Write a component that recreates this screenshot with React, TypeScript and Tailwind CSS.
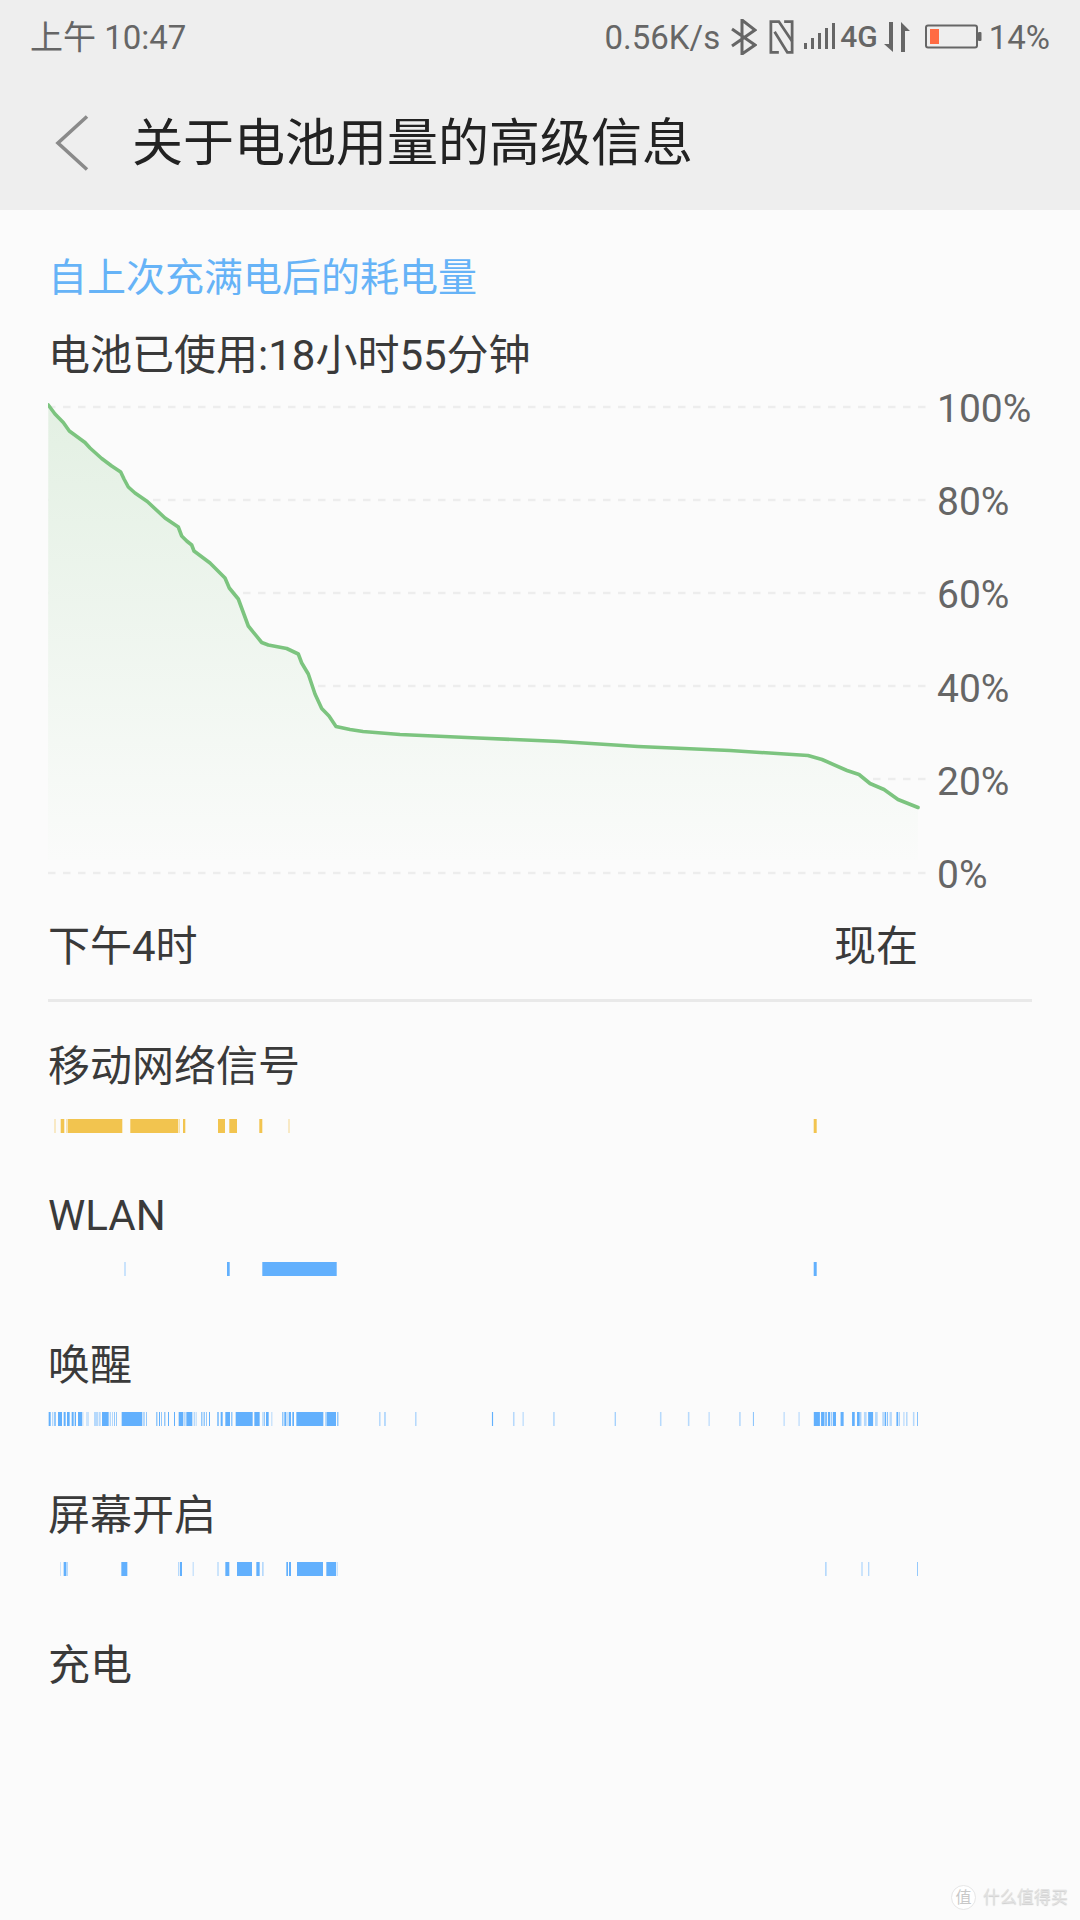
const FONT = 'font-["Roboto","Noto_Sans_CJK_SC",sans-serif]';

const top1 = "48.3,405 55,414 63.3,422.5 69.3,431 85,442.5 90,448 101.7,458.5 111.7,466 120.7,472 124,479 128.3,487 135,493 147.3,501.5 165,518 178.3,527 181.7,536 186.7,541 191.7,545 194,551 210,563 225,578 229.3,588 238.3,599 248.3,626 261.7,642.5 268.3,645 286.7,648.5 298.3,654 301.7,663 308.3,674 315,694 321.7,708.5 329,716 336,726.5 350,729.5 363,731.5 400,734.5 478,738 560,741.5 638,746.5 730,750.5 808,755.5 822,759.5 847,770.5 859,774.5 870,783.5 884,789.5 898,799.5 918,807.5";

type Seg = [number, number, number?];
const sc = (arr: Seg[], ox: number, k: number): Seg[] =>
  arr.map(([a, b, l]) => [ox + a / k, ox + b / k, l] as Seg);

const yellow: Seg[] = [
  [54.3, 55.7, 1], [60.7, 64.3], [66, 67.3, 1], [67.7, 122.3], [130.3, 178.3], [179, 180, 1],
  [183, 185.3], [218, 225], [229.3, 237], [259.3, 262.3], [288.3, 289.7, 1], [813.7, 816.7],
];
const wlan: Seg[] = [[124.3, 125.7, 1], [227, 229.7], [262.3, 336.7], [813.7, 816.7]];
const wake: Seg[] = [
  ...sc([[56,62],[66,70,1],[73,77],[84,96],[101,107],[111,119],[125,131],[134,138],[144,156],[157,160,1],[168,170,1],[172,176,1],[192,204,1],[206,212,1],[216,236],[239,243,1],[246,249,1],[252,254],[258,260],[275,336],[337,345,1],[348,350],[379,382],[387,390],[394,396],[403,406],[414,417],[432,435],[446,460],[462,467,1],[469,487],[491,495,1],[497,500,1],[514,517],[521,524],[528,530],[537,540],[562,566],[572,578],[586,600],[604,607],[617,668],[673,689],[698,700],[703,705],[708,716],[724,727,1],[757,760],[763,768],[770,772],[776,783],[787,792],[799,880],[885,890,1],[890,918],[922,925]], 30, 3),
  ...sc([[102,106,1],[115,120,1],[196,200,1],[397,400],[452,456,1],[477,480,1],[557,561,1],[718,720],[836,840,1],[909,913,1],[963,966,1],[1043,1047,1],[1079,1081],[1159,1162,1],[1198,1201,1],[1238,1254],[1257,1266],[1268,1272],[1275,1281],[1284,1286],[1288,1296],[1308,1316],[1338,1345],[1351,1358],[1360,1362],[1369,1376,1],[1380,1393],[1398,1405,1],[1418,1420],[1423,1427],[1430,1432],[1436,1442,1],[1454,1458],[1460,1462],[1472,1475,1],[1479,1483,1],[1497,1501,1],[1508,1510]], 340, 2.613),
];
const screen: Seg[] = [
  ...sc([[60,62,1],[71,79],[80,84,1],[244,262],[414,418,1],[420,426],[458,461,1],[532,536,1],[556,568],[591,636],[649,659],[666,671,1],[739,744],[747,753],[771,849],[859,888],[890,893,1]], 40, 3),
  ...sc([[75,80,1],[184,188,1],[204,208,1],[351,353]], 800, 3),
];

function Bars({ segs, color }: { segs: Seg[]; color: string }) {
  return (
    <svg viewBox="48 0 984 14" className="block w-[984px] h-[14px]">
      {segs.map(([a, b, l], i) => (
        <rect key={i} x={a} y={0} width={b - a} height={14} fill={color} opacity={l ? 0.45 : 1} />
      ))}
    </svg>
  );
}

function Row({ label, segs, color, barClass }: { label: string; segs?: Seg[]; color?: string; barClass: string }) {
  return (
    <div className="h-[150px]">
      <div className="h-[54px] leading-[54px] text-[42px] text-[#3a3a3a]">{label}</div>
      {segs && color && (
        <div className={barClass}>
          <Bars segs={segs} color={color} />
        </div>
      )}
    </div>
  );
}

function StatusIcons() {
  const c = "#666666";
  return (
    <div className="flex items-center">
      <svg viewBox="0 0 26 36" className="w-[26px] h-[36px] ml-[11px]" fill="none" stroke={c} strokeWidth="3">
        <path d="M1 10 L24 26 L11 35 V1 L24 11 L1 27" />
      </svg>
      <svg viewBox="0 0 23 32" className="w-[25px] h-[34px] ml-[12px]" fill="none" stroke={c} strokeWidth="2.6">
        <path d="M9 30.5 H1.5 V1.5 H9 L21.5 20" />
        <path d="M14 1.5 H21.5 V30.5 H17 L5 11" />
      </svg>
      <svg viewBox="0 0 32 28" className="w-[32px] h-[28px] ml-[10px]" fill={c}>
        <rect x="0" y="20" width="3" height="6" />
        <rect x="7" y="15" width="3" height="11" />
        <rect x="14" y="10" width="3" height="16" />
        <rect x="21" y="5" width="3" height="21" />
        <rect x="28" y="0" width="3" height="26" />
      </svg>
      <span className="text-[30px] font-medium leading-none text-[#666] ml-[4px]">4G</span>
      <svg viewBox="0 0 28 32" className="w-[28px] h-[32px] ml-[5px]" fill={c}>
        <path d="M6 1 H10 V31 L1 23 H6 Z" />
        <path d="M18 31 H22 V10 H27 L18 1 Z" />
      </svg>
      <svg viewBox="0 0 58 26" className="w-[58px] h-[26px] ml-[14px]">
        <rect x="1" y="1.5" width="51" height="22" rx="2" fill="none" stroke={c} strokeWidth="2" />
        <rect x="53" y="8" width="3.5" height="9" rx="1" fill={c} />
        <rect x="5" y="5" width="9" height="15" fill="#ff6b43" />
      </svg>
      <span className="text-[33px] leading-none text-[#666] ml-[6px]">14%</span>
    </div>
  );
}

export default function App() {
  const grid = [407, 500, 593, 686, 779, 873];
  return (
    <div className={`relative w-[1080px] h-[1920px] overflow-hidden bg-[#fbfbfb] ${FONT}`}>
      <header className="h-[210px] bg-[#eeeeee]">
        <div className="h-[72px] pt-[2px] pl-[30px] pr-[30px] flex items-center justify-between text-[#666]">
          <span className="text-[33px] leading-none">上午 10:47</span>
          <div className="flex items-center">
            <span className="text-[33px] leading-none">0.56K/s</span>
            <StatusIcons />
          </div>
        </div>
        <div className="h-[138px] pt-[4px] pl-[55px] flex items-center">
          <svg viewBox="0 0 34 56" className="w-[34px] h-[56px]" fill="none" stroke="#8a8a8a" strokeWidth="3.6">
            <path d="M32 1.5 L3 28 L32 54.5" />
          </svg>
          <h1 className="ml-[43px] text-[51px] leading-none font-normal text-[#222]">关于电池用量的高级信息</h1>
        </div>
      </header>

      <main className="pl-[48px] pr-[48px]">
        <div className="pt-[41px] h-[95px] leading-[54px] text-[39px] text-[#66b3f7]">自上次充满电后的耗电量</div>
        <div className="mt-[24px] h-[54px] leading-[54px] text-[42px] text-[#3a3a3a]">电池已使用:18小时55分钟</div>

        <div className="mt-[5px] h-[506px] flex">
          <svg viewBox="48 388 880 506" className="block w-[880px] h-[506px]">
            <defs>
              <linearGradient id="fillg" x1="0" y1="404" x2="0" y2="860" gradientUnits="userSpaceOnUse">
                <stop offset="0" stopColor="#e3f0e3" />
                <stop offset="1" stopColor="#fafbfa" />
              </linearGradient>
            </defs>
            {grid.map((y) => (
              <line key={y} x1="48" x2="926" y1={y} y2={y} stroke="#ededed" strokeWidth="2.4" strokeDasharray="7.5 7.5" />
            ))}
            <polygon points={`${top1} 918,860 48,860`} fill="url(#fillg)" />
            <polyline points={top1} fill="none" stroke="#7cc47f" strokeWidth="3.6" strokeLinejoin="round" strokeLinecap="round" />
          </svg>
          <div className="ml-[9px] mt-[1px] flex flex-col justify-between h-[506px] text-[39px] text-[#666]">
            {["100%", "80%", "60%", "40%", "20%", "0%"].map((t) => (
              <div key={t} className="h-[40px] leading-[40px]">{t}</div>
            ))}
          </div>
        </div>

        <div className="mt-[26px] h-[54px] w-[870px] flex items-center justify-between leading-[54px] text-[42px] text-[#3a3a3a]">
          <span>下午4时</span>
          <span>现在</span>
        </div>
        <div className="mt-[25px] h-[3px] bg-[#e9e9e9]" />

        <div className="mt-[38px] flex flex-col">
          <Row label="移动网络信号" segs={yellow} color="#f2c44f" barClass="mt-[25px]" />
          <div className="-mt-[1px]">
            <Row label="WLAN" segs={wlan} color="#62b0fd" barClass="mt-[19px]" />
          </div>
          <Row label="唤醒" segs={wake} color="#62b0fd" barClass="mt-[19px]" />
          <Row label="屏幕开启" segs={screen} color="#62b0fd" barClass="mt-[19px]" />
          <Row label="充电" barClass="" />
        </div>
      </main>

      <div className="absolute left-[951px] top-[1885px] flex items-center">
        <div className="w-[25px] h-[25px] rounded-full bg-white border border-[#e6e6e6] flex items-center justify-center text-[16px] leading-none text-[#c8c8c8]">值</div>
        <span className="ml-[7px] text-[17px] leading-none text-[#e2e2e2] [text-shadow:0_1px_1px_#cccccc]">什么值得买</span>
      </div>
    </div>
  );
}
